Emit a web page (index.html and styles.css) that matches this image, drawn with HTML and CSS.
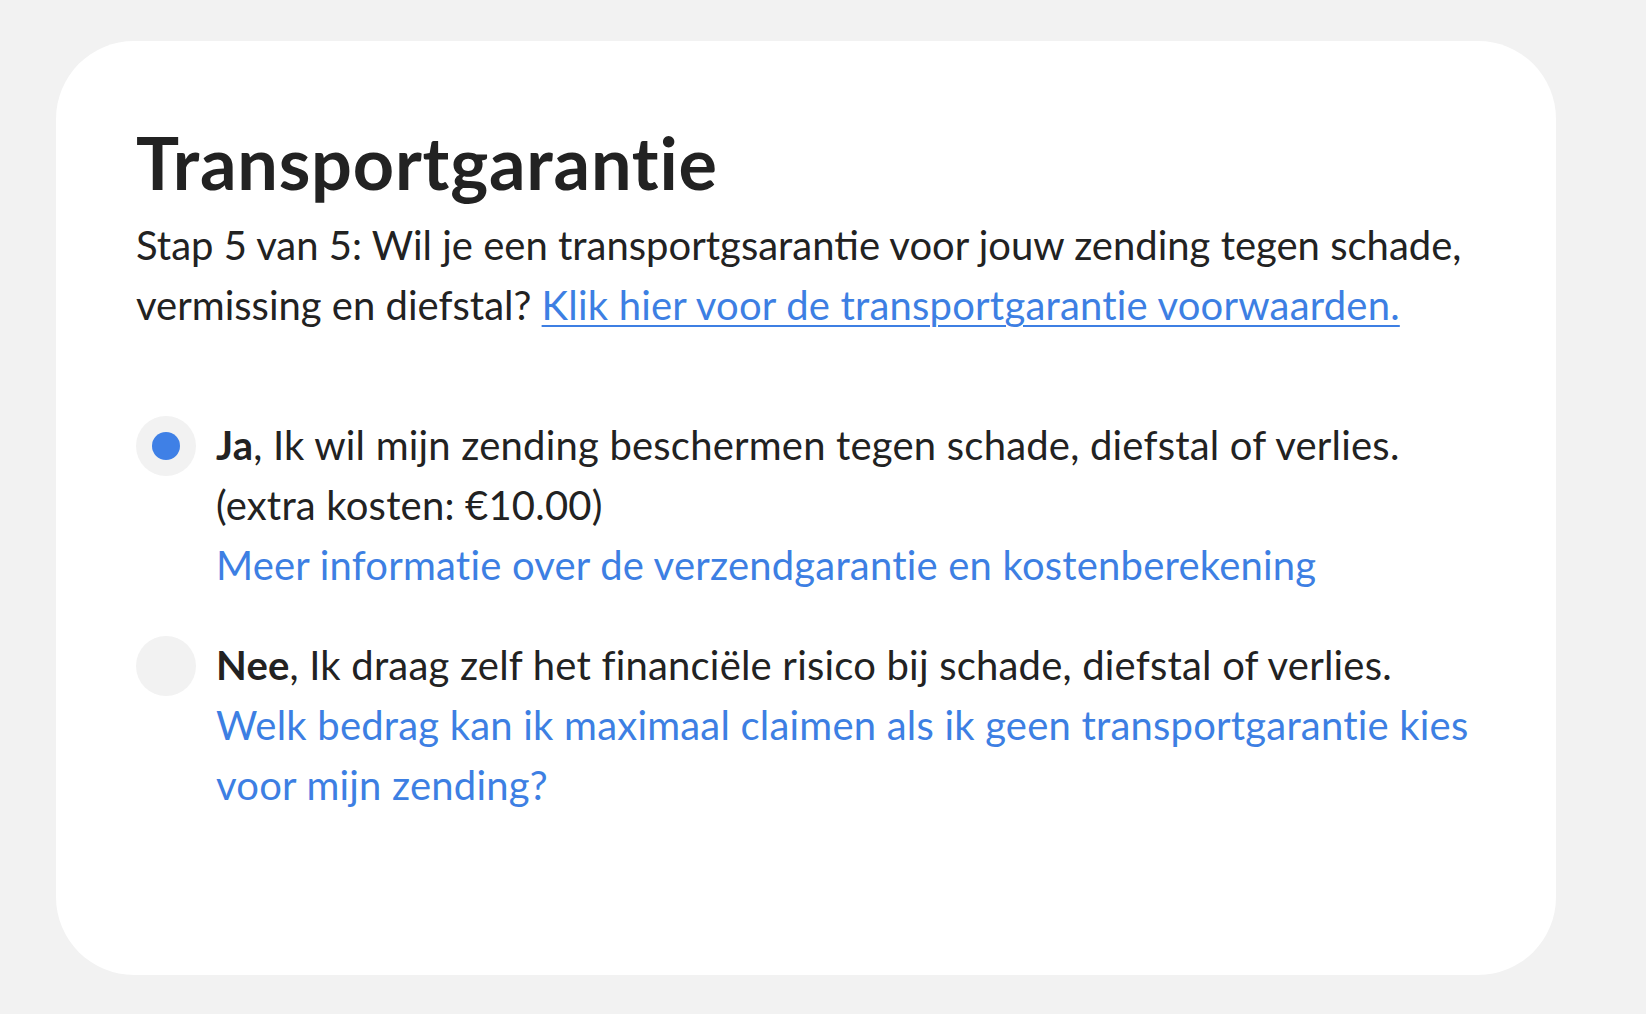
FILE: index.html
```html
<html lang="nl">
  <head>
    <meta charset="UTF-8" />
    <meta name="viewport" content="width=device-width, initial-scale=1.0" />
    <title>Transportgarantie</title>

    <link rel="stylesheet" href="styles.css">
  </head>

  <body>
    <div class="card">
      <h1 class="cardTitle">Transportgarantie</h1>
      <p class="intro">
        Stap 5 van 5: Wil je een transportgsarantie voor jouw zending tegen schade,
        vermissing en diefstal? <a class="termsLink" href="#">Klik hier voor de transportgarantie voorwaarden.</a>
      </p>

      <div class="options">
        <label class="option">
          <input type="radio" name="guarantee" value="yes" checked />
          <span class="radio"></span>
          <span class="optionText">
            <span class="optionLine"><b>Ja</b>, Ik wil mijn zending beschermen tegen schade, diefstal of verlies. (extra kosten: €10.00)</span>
            <a class="infoLink" href="#">Meer informatie over de verzendgarantie en kostenberekening</a>
          </span>
        </label>

        <label class="option">
          <input type="radio" name="guarantee" value="no" />
          <span class="radio"></span>
          <span class="optionText">
            <span class="optionLine"><b>Nee</b>, Ik draag zelf het financiële risico bij schade, diefstal of verlies.</span>
            <a class="infoLink" href="#">Welk bedrag kan ik maximaal claimen als ik geen transportgarantie kies voor mijn zending?</a>
          </span>
        </label>
      </div>
    </div>
  </body>
</html>
```

FILE: styles.css
```css
body {
  margin: 0;
  background-color: #f2f2f2;
  font-family: Lato, 'Noto Sans', sans-serif;
  color: #222222;
}

.card {
  margin: 41px 0 39px 56px;
  width: 1500px;
  box-sizing: border-box;
  padding: 78px 80px 160px 80px;
  background-color: white;
  border-radius: 78px;
}

.cardTitle {
  margin: 0;
  font-size: 72px;
  line-height: 86px;
  font-weight: 700;
  letter-spacing: 0.8px;
}

.intro {
  margin: 10px 0 0 0;
  font-size: 40px;
  line-height: 60px;
}

.termsLink {
  color: #3d7fe3;
  text-decoration: underline;
  text-underline-offset: 5px;
  text-decoration-thickness: 2px;
  letter-spacing: 0.2px;
}

.options {
  margin-top: 80px;
  display: flex;
  flex-direction: column;
  gap: 40px;
}

.option {
  display: flex;
  align-items: flex-start;
  gap: 20px;
  cursor: pointer;
}

.option input {
  display: none;
}

.radio {
  flex: none;
  width: 60px;
  height: 60px;
  margin-top: 1px;
  border-radius: 50%;
  background-color: #f2f2f2;
  display: flex;
  align-items: center;
  justify-content: center;
}

.option input:checked + .radio::after {
  content: '';
  width: 28px;
  height: 28px;
  border-radius: 50%;
  background-color: #3f80e6;
}

.optionText {
  display: flex;
  flex-direction: column;
  font-size: 40px;
  line-height: 60px;
  letter-spacing: 0.2px;
}

.optionLine b {
  font-weight: 700;
}

.infoLink {
  color: #3d7fe3;
  text-decoration: none;
}
```
